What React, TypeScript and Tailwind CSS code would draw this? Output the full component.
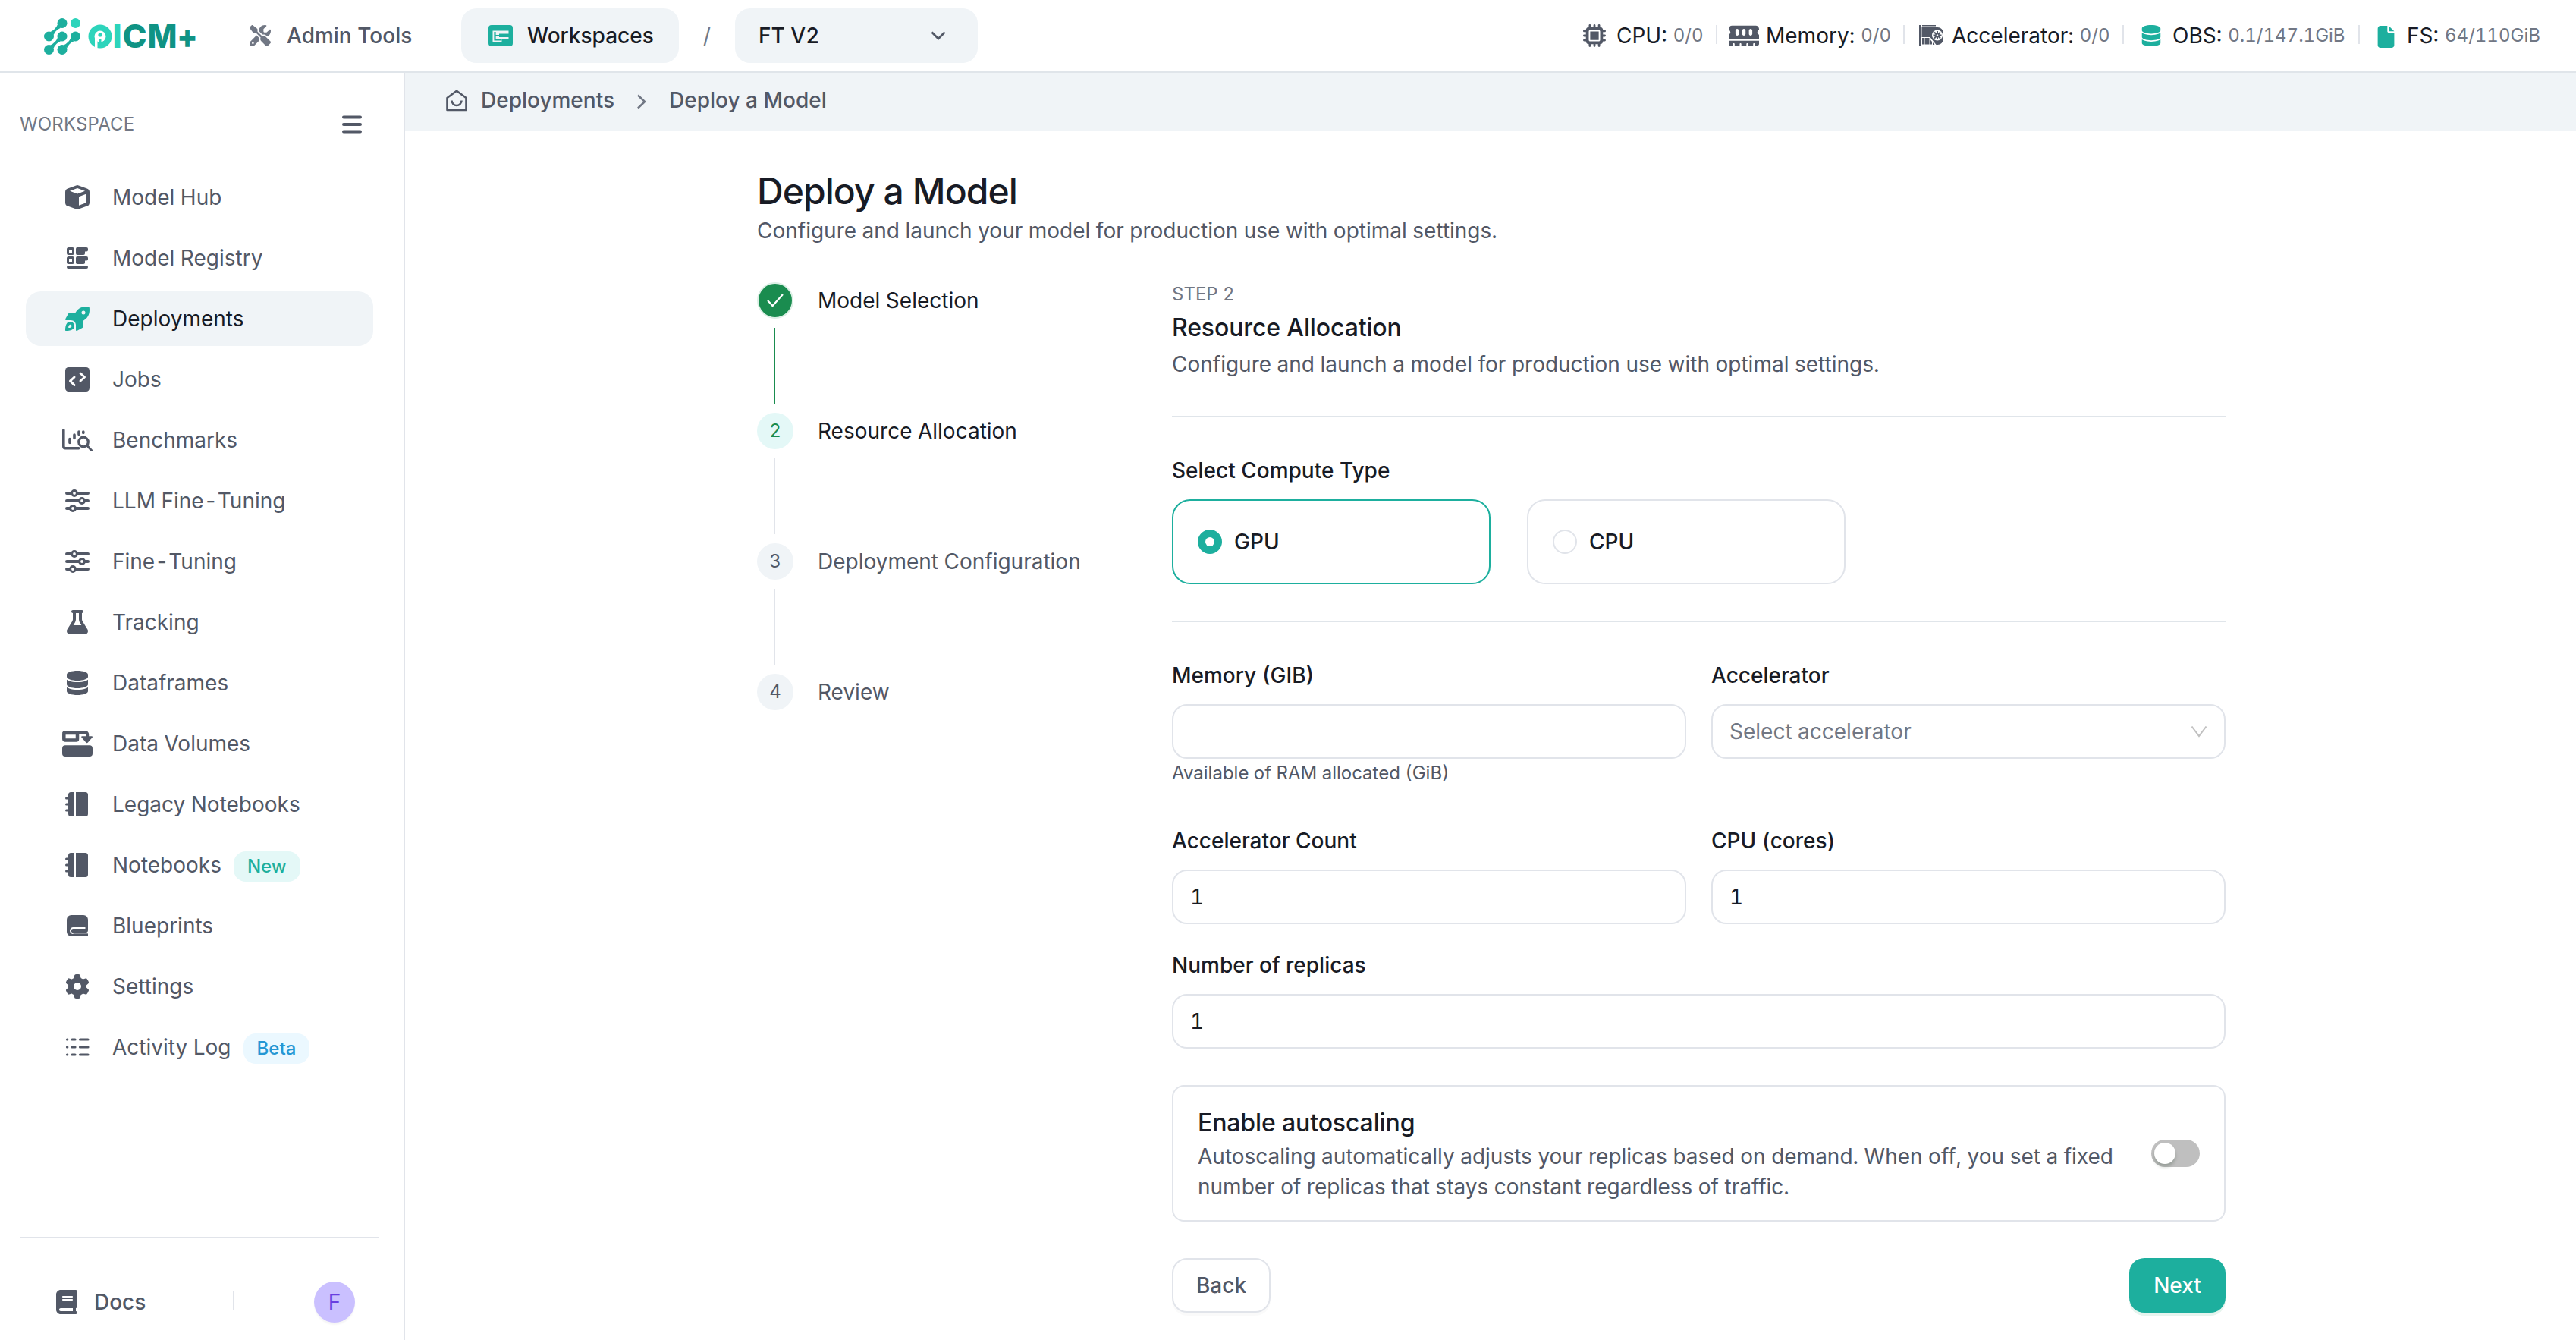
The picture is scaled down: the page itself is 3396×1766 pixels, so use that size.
import React from 'react';
import {
  FaBook,
  FaDatabase,
  FaFile,
  FaFlask,
  FaGear,
  FaMemory,
  FaMicrochip,
  FaScrewdriverWrench,
} from 'react-icons/fa6';

interface NavItem {
  label: string;
  icon: React.ReactNode;
  badge?: 'New' | 'Beta';
  active?: boolean;
}

const Logo = () => (
  <svg width="210" height="52" viewBox="0 0 210 52" className="shrink-0">
    <g fill="#1daf9e">
      <circle cx="26" cy="9.500" r="6.500" />
      <circle cx="8.500" cy="27" r="6.500" />
      <circle cx="26" cy="27" r="6.500" />
      <circle cx="43.500" cy="27" r="6.500" />
      <circle cx="8.500" cy="44.500" r="6.500" />
      <circle cx="26" cy="44.500" r="6.500" />
      <path d="M19.800 11.500Q17.500 17.500 10.500 21L14.700 25Q17 19 24 15.800z" />
      <path d="M19.800 29Q17.500 35 10.500 38.500L14.700 42.500Q17 36.500 24 33.300z" />
      <path d="M37.300 29Q35 35 28 38.500L32.200 42.500Q34.500 36.500 41.500 33.300z" />
    </g>
    <circle cx="43.500" cy="9.500" r="6.500" fill="#2dd4bb" />
    <circle cx="76" cy="27" r="15.500" fill="#2dd4bb" />
    <circle cx="76" cy="27" r="7.500" fill="#fff" />
    <path d="M69 27h3.500v16h-3.500z" fill="#fff" />
    <circle cx="76" cy="25" r="2.600" fill="#2dd4bb" />
    <path d="M74 30h3.500v10h-3.500z" fill="#2dd4bb" />
    <g fontFamily="Inter, sans-serif" fontWeight="800" fontSize="42.500">
      <text x="92.500" y="42" fill="#2dd4bb">I</text>
      <text x="105.500" y="42" fill="#0f9384" textLength="32" lengthAdjust="spacingAndGlyphs">C</text>
      <text x="138.500" y="42" fill="#0f9384" textLength="39" lengthAdjust="spacingAndGlyphs">M</text>
      <text x="178" y="42" fill="#0f9384" textLength="26" lengthAdjust="spacingAndGlyphs">+</text>
    </g>
  </svg>
);

const WorkspaceIcon = () => (
  <svg width="32" height="28" viewBox="0 0 32 28" fill="none">
    <rect width="32" height="28" rx="4" fill="#1daf9e" />
    <path d="M5.500 7.500h21v15h-21z" fill="#f0f4f7" />
    <path d="M8.500 9v10.500h9M8.500 14h6" stroke="#1daf9e" strokeWidth="2.200" />
    <path d="M14 11.500h13v4.500h-13zM17.500 18h9.500v4h-9.500z" fill="#1daf9e" />
  </svg>
);

const AcceleratorIcon = () => (
  <svg width="32" height="28" viewBox="0 0 32 28" fill="currentColor">
    <path d="M0 0h2v28h-2zM4 0h18v1.500h-18z" />
    <path d="M3.500 3h21a7.500 7.500 0 0 1 7.500 7.500v8a7.500 7.500 0 0 1-7.500 7.500h-2l-8-10h-11z" />
    <path d="M4 17h2.500v8.500h-2.500zM7.500 17h2.500v8.500h-2.500zM11 17h2.500v8.500h-2.500zM14.500 19l2.500 3v3.500h-2.500zM18 23l2.500 3h-2.500z" />
    <circle cx="24" cy="13.500" r="7" fill="#fff" />
    <g stroke="#525866" strokeWidth="2">
      <path d="M24 8v11M18.500 13.500h11M20 9.500l8 8M28 9.500l-8 8" />
    </g>
    <circle cx="24" cy="13.500" r="1.200" fill="#fff" />
  </svg>
);

const HomeIcon = () => (
  <svg width="28" height="29" viewBox="0 0 28 29" fill="none" stroke="currentColor" strokeWidth="2.600">
    <path d="M14 1.800 1.500 11v16h25v-16z" strokeLinejoin="round" />
    <path d="M7.500 14.500a6.500 6.500 0 0 0 13 0" />
  </svg>
);

const CubeIcon = () => (
  <svg width="32" height="32" viewBox="0 0 32 32" fill="currentColor">
    <path
      fillRule="evenodd"
      d="M14.300.4a5 5 0 0 1 3.400 0l11 4a5 5 0 0 1 3.300 4.700v13.800a5 5 0 0 1-3.300 4.700l-11 4a5 5 0 0 1-3.400 0l-11-4a5 5 0 0 1-3.300-4.700v-13.800a5 5 0 0 1 3.300-4.700zM16 4 6 7.700l10 3.700 10-3.700zM18 15.200v11.600l10-3.800v-11.500z"
    />
  </svg>
);

const RegistryIcon = () => (
  <svg width="28" height="28" viewBox="0 0 28 28" fill="currentColor">
    <rect x="1.500" y="1.500" width="7" height="7" rx="1" fill="none" stroke="currentColor" strokeWidth="3" />
    <rect x="1.500" y="13.500" width="7" height="7" rx="1" fill="none" stroke="currentColor" strokeWidth="3" />
    <path d="M14 0h12a2 2 0 0 1 2 2v1.500a2 2 0 0 1-2 2h-2v2.500a2 2 0 0 1-2 2h-8a2 2 0 0 1-2-2v-6a2 2 0 0 1 2-2zM14 12h12a2 2 0 0 1 2 2v1.500a2 2 0 0 1-2 2h-2v2.500a2 2 0 0 1-2 2h-8a2 2 0 0 1-2-2v-6a2 2 0 0 1 2-2z" />
    <rect y="24" width="28" height="4" rx="2" />
  </svg>
);

const RocketIcon = () => (
  <svg width="32" height="32" viewBox="0 0 32 32" fill="currentColor">
    <path
      fillRule="evenodd"
      d="M30.500.2C22.500-.8 17 2 13.500 8H7c-1.500 0-2.500.6-3.200 1.800L.3 16.200c-.5.9 0 1.800 1 1.800h6.200c3.700 0 6.500 2.800 6.500 6.500v6.200c0 1 .9 1.600 1.800 1.100l6.400-3.600c1.100-.7 1.800-1.800 1.800-3v-6.700c6-3.500 8.800-9 7.800-17-.1-.7-.6-1.200-1.300-1.300zM24 5.500a2.500 2.500 0 1 1 0 5 2.500 2.500 0 0 1 0-5z"
    />
    <path
      fillRule="evenodd"
      d="M6.500 20a5.500 5.500 0 0 1 3.900 9.400c-2 2-6.400 2.600-9.400 2.600-.6 0-1-.4-1-1 0-3 .6-7.400 2.600-9.400A5.500 5.500 0 0 1 6.500 20zM7.300 23.700c-1 0-2 .4-2.500 1.300-.5.700-.7 1.900-.6 2.700 0 .3.200.4.400.4.900 0 2-.1 2.700-.6a2.100 2.100 0 0 0 0-3.800z"
    />
  </svg>
);

const JobsIcon = () => (
  <svg width="32" height="32" viewBox="0 0 32 32" fill="none">
    <rect width="32" height="32" rx="4.500" fill="currentColor" />
    <path
      d="M12 13 6.500 18.200l5.500 5.300M20 8l5.500 5-5.500 5"
      stroke="#fff"
      strokeWidth="3"
      strokeLinecap="round"
      strokeLinejoin="round"
    />
  </svg>
);

const BenchmarkIcon = () => (
  <svg width="40" height="30" viewBox="0 0 40 30" fill="none" stroke="currentColor" strokeWidth="3.600" strokeLinecap="round">
    <path d="M1.800 1.800v21.500c0 1.700.8 2.500 2.500 2.500h17.500" />
    <path d="M10 13.500v5M16 8v4.500M22 4v3.500M27.800 4v1.500" />
    <circle cx="28" cy="17.500" r="6.300" strokeWidth="3.200" />
    <path d="M33 22.500l5.500 6" strokeWidth="3" />
  </svg>
);

const SlidersIcon = () => (
  <svg width="32" height="30" viewBox="0 0 32 30" fill="#fff" stroke="currentColor" strokeLinecap="round">
    <path d="M2 5h28M2 15h28M2 25h28" strokeWidth="4" />
    <g strokeWidth="3">
      <circle cx="12" cy="5" r="3.400" />
      <circle cx="22" cy="15" r="3.400" />
      <circle cx="10" cy="25" r="3.400" />
    </g>
  </svg>
);

const VolumesIcon = () => (
  <svg width="40" height="34" viewBox="0 0 40 34" fill="currentColor">
    <path d="M2.200 3.500a1.500 1.500 0 0 1 1.500-1.500h26c2.500 0 3.500 1.500 3.500 3.500v5" fill="none" stroke="currentColor" strokeWidth="4" />
    <rect x="2.300" y="3" width="17.700" height="9.500" rx="1.500" fill="#fff" stroke="currentColor" strokeWidth="4.500" />
    <path d="M26.300 7.300h12.500c1 0 1.500 1 .8 1.800l-5.700 6.500a1.700 1.700 0 0 1-2.600 0l-5.700-6.500c-.7-.8-.3-1.800.7-1.800z" />
    <rect y="19.300" width="40" height="14.700" rx="4" />
  </svg>
);

const NotebookIcon = () => (
  <svg width="32" height="32" viewBox="0 0 32 32" fill="currentColor">
    <path d="M7.500 0h4.500v32h-4.500a3.500 3.500 0 0 1-3.500-3.500v-25a3.500 3.500 0 0 1 3.500-3.500zM14 0h12.500a3.500 3.500 0 0 1 3.500 3.500v25a3.500 3.500 0 0 1-3.500 3.500h-12.500z" />
    <path d="M1.500 8h4M1.500 16h4M1.500 24h4" stroke="currentColor" strokeWidth="3" strokeLinecap="round" />
  </svg>
);

const BlueprintIcon = () => (
  <svg width="28" height="28" viewBox="0 0 28 28" fill="currentColor">
    <path d="M6 0h16a6 6 0 0 1 6 6v14c0 1.500-.8 2.500-2 3v.8h.5a2 2 0 0 1 0 4.200H6a6 6 0 0 1-6-6V6a6 6 0 0 1 6-6z" />
    <path d="M24.500 17h-16a3.600 3.600 0 0 0 0 7.200" fill="none" stroke="#fff" strokeWidth="1.800" />
    <path d="M7 23.700h21" stroke="#fff" strokeWidth="1.200" />
  </svg>
);

const ActivityIcon = () => (
  <svg width="32" height="26" viewBox="0 0 32 26" fill="none" stroke="currentColor" strokeWidth="3.200" strokeLinecap="round">
    <path d="M2.500 3h.3M9 3h4M19.500 3h10.500M2.500 13h.3M9 13h4M19.500 13h10.500M2.500 23h.3M9 23h4M19.500 23h10.500" />
  </svg>
);

const navItems: NavItem[] = [
  { label: 'Model Hub', icon: <CubeIcon /> },
  { label: 'Model Registry', icon: <RegistryIcon /> },
  { label: 'Deployments', icon: <RocketIcon />, active: true },
  { label: 'Jobs', icon: <JobsIcon /> },
  { label: 'Benchmarks', icon: <BenchmarkIcon /> },
  { label: 'LLM Fine-Tuning', icon: <SlidersIcon /> },
  { label: 'Fine-Tuning', icon: <SlidersIcon /> },
  { label: 'Tracking', icon: <FaFlask size={32} /> },
  { label: 'Dataframes', icon: <FaDatabase size={32} /> },
  { label: 'Data Volumes', icon: <VolumesIcon /> },
  { label: 'Legacy Notebooks', icon: <NotebookIcon /> },
  { label: 'Notebooks', icon: <NotebookIcon />, badge: 'New' },
  { label: 'Blueprints', icon: <BlueprintIcon /> },
  { label: 'Settings', icon: <FaGear size={32} /> },
  { label: 'Activity Log', icon: <ActivityIcon />, badge: 'Beta' },
];

const steps = ['Model Selection', 'Resource Allocation', 'Deployment Configuration', 'Review'];

const Stat = ({ icon, label, value, className }: { icon: React.ReactNode; label: string; value: string; className: string }) => (
  <div className={`flex items-center whitespace-nowrap ${className}`}>
    {icon}
    <span className="text-[#181b25]">{label}</span>
    <span className="ml-2 text-2xl text-[#717784]">{value}</span>
  </div>
);

const StatDivider = () => <div className="mb-1 h-[25px] w-0.5 bg-[#e1e4ea]" />;

const Header = () => (
  <header className="flex h-24 shrink-0 items-center border-b-2 border-[#e0e5ea] pl-14">
    <Logo />
    <div className="ml-[63px] flex w-[279px] items-center">
      <FaScrewdriverWrench size={28} color="#717784" />
      <span className="ml-[21px] font-medium">Admin Tools</span>
    </div>
    <div className="flex h-[72px] w-[287px] items-center rounded-[20px] bg-[#f0f4f7] pl-9 font-medium text-[#181b25]">
      <WorkspaceIcon />
      <span className="ml-[19px]">Workspaces</span>
    </div>
    <span className="w-[74px] text-center text-[#717784]">/</span>
    <div className="flex h-[72px] w-[320px] items-center justify-between rounded-[20px] bg-[#f0f4f7] pr-[42px] pl-[31px] font-medium text-[#181b25]">
      FT V2
      <svg width="20" height="12" viewBox="0 0 20 12" fill="none" stroke="#525866" strokeWidth="2.800">
        <path d="M1.500 1.500 10 10l8.500-8.500" />
      </svg>
    </div>
    <div className="ml-auto flex items-center">
      <Stat className="w-[175px]" icon={<FaMicrochip size={30} className="mr-[14px]" />} label="CPU:" value="0/0" />
      <StatDivider />
      <Stat className="ml-[15px] w-[230px]" icon={<FaMemory size={36} className="mr-[9px] w-10" />} label="Memory:" value="0/0" />
      <StatDivider />
      <Stat className="ml-[19px] w-[268px]" icon={<span className="mr-[11px]"><AcceleratorIcon /></span>} label="Accelerator:" value="0/0" />
      <StatDivider />
      <Stat className="ml-[22px] w-[287px]" icon={<FaDatabase size={28} color="#1daf9e" className="mr-[14px]" />} label="OBS:" value="0.1/147.1GiB" />
      <StatDivider />
      <Stat className="ml-[20px] w-[265px]" icon={<FaFile size={29} color="#1daf9e" className="mt-[2px] mr-[13px]" />} label="FS:" value="64/110GiB" />
    </div>
  </header>
);

const Sidebar = () => (
  <aside className="flex w-[534px] shrink-0 flex-col border-r-2 border-[#e1e4ea] pt-12">
    <div className="flex h-10 items-center justify-between pr-[55px] pl-[26px] text-2xl tracking-[0.15px] text-[#717784]">
      WORKSPACE
      <svg width="26" height="24" viewBox="0 0 26 24" stroke="#525866" strokeWidth="4" strokeLinecap="round">
        <path d="M2 2.500h22M2 12h22M2 21.500h22" />
      </svg>
    </div>
    <nav className="mt-10 mr-10 ml-[34px] flex flex-col gap-2">
      {navItems.map((item) => (
        <div
          key={item.label}
          className={`flex h-[72px] items-center rounded-[20px] pl-12 ${item.active ? 'bg-[#f0f4f7] text-[#181b25]' : ''}`}
        >
          <span className={`flex w-10 justify-center ${item.active ? 'text-[#1daf9e]' : ''}`}>{item.icon}</span>
          <span className="ml-[26px]">{item.label}</span>
          {item.badge && (
            <span
              className={`mt-1 ml-4 flex h-10 items-center rounded-2xl px-[18px] text-2xl font-medium ${
                item.badge === 'New' ? 'bg-[#e4f8f7] text-[#1daf9e]' : 'bg-[#ebf8ff] text-[#2597d4]'
              }`}
            >
              {item.badge}
            </span>
          )}
        </div>
      ))}
    </nav>
    <div className="mt-auto mr-8 ml-[26px] flex h-[136px] border-t-2 border-[#e1e4ea] pt-14">
      <div className="flex h-14 w-[281px] items-center pl-12 font-medium">
        <FaBook size={32} className="w-7" />
        <span className="ml-[22px]">Docs</span>
      </div>
      <div className="mt-3.5 h-[25px] w-0.5 bg-[#e1e4ea]" />
      <div className="mt-px ml-[105px] flex h-[54px] w-[54px] items-center justify-center rounded-full bg-[#cac0ff] text-[#693ee0] shadow-[0_3px_2px_rgba(0,0,0,0.04)]">
        F
      </div>
    </div>
  </aside>
);

const Stepper = () => (
  <div className="w-[547px] shrink-0">
    {steps.map((step, i) => (
      <div key={step} className={`flex ${i < steps.length - 1 ? 'h-[172px]' : 'h-12'}`}>
        <div className="flex w-12 flex-col items-center">
          <div
            className={`flex h-12 w-12 shrink-0 items-center justify-center rounded-full text-2xl ${
              i === 0
                ? 'border-2 border-[#dcefe5] bg-[#1a8c4f] text-white'
                : i === 1
                  ? 'bg-[#e4f8f7] text-[#1a8c4f]'
                  : 'bg-[#f0f4f7]'
            }`}
          >
            {i === 0 ? (
              <svg width="22" height="18" viewBox="0 0 22 18" fill="none" stroke="currentColor" strokeWidth="2.200">
                <path d="M1 9l6.500 7L21 1" />
              </svg>
            ) : (
              i + 1
            )}
          </div>
          {i < steps.length - 1 && (
            <div className={`mt-3 mr-0.5 h-[100px] w-0.5 ${i === 0 ? 'bg-[#1a8c4f]' : 'bg-[#e1e4ea]'}`} />
          )}
        </div>
        <span className={`ml-8 h-12 leading-[49px] ${i < 2 ? 'text-[#181b25]' : ''}`}>{step}</span>
      </div>
    ))}
  </div>
);

const Field = ({ label, hint, children }: { label: string; hint?: string; children?: React.ReactNode }) => (
  <div className="flex-1">
    <div className="leading-10 font-medium text-[#181b25]">{label}</div>
    <div className="mt-[18px] flex h-[72px] items-center justify-between rounded-[20px] border-2 border-[#e1e4ea] px-[22px] text-[#181b25]">
      {children}
    </div>
    {hint && <div className="h-9 text-2xl leading-[38px]">{hint}</div>}
  </div>
);

const ComputeOption = ({ label, selected }: { label: string; selected?: boolean }) => (
  <div
    className={`flex h-28 w-[420px] items-center rounded-3xl border-2 pl-8 font-medium text-[#181b25] ${
      selected ? 'border-[#1daf9e]' : 'border-[#e1e4ea]'
    }`}
  >
    <span
      className={`flex h-8 w-8 items-center justify-center rounded-full border-2 ${
        selected ? 'border-[#1daf9e] bg-[#1daf9e]' : 'border-[#e1e4ea]'
      }`}
    >
      {selected && <span className="h-3 w-3 rounded-full bg-white" />}
    </span>
    <span className="ml-4">{label}</span>
  </div>
);

const ResourceForm = () => (
  <div className="w-[1389px]">
    <div className="text-2xl leading-[31px] text-[#717784]">STEP 2</div>
    <h2 className="mt-[5px] text-[32px] leading-[48px] font-medium tracking-[-0.13px] text-[#181b25]">Resource Allocation</h2>
    <p className="mt-1 leading-10">Configure and launch a model for production use with optimal settings.</p>
    <hr className="mt-12 border-t-2 border-[#e0e5ea]" />

    <div className="mt-[50px] leading-10 font-medium text-[#181b25]">Select Compute Type</div>
    <div className="mt-[18px] flex gap-12">
      <ComputeOption label="GPU" selected />
      <ComputeOption label="CPU" />
    </div>
    <hr className="mt-12 border-t-2 border-[#e0e5ea]" />

    <div className="mt-[50px] flex gap-[33px]">
      <Field label="Memory (GIB)" hint="Available of RAM allocated (GiB)" />
      <Field label="Accelerator">
        <span className="text-[#717784]">Select accelerator</span>
        <svg width="22" height="16" viewBox="0 0 22 16" fill="none" stroke="#bfbfbf" strokeWidth="2">
          <path d="M1.500 1.500 11 14l9.500-12.500" />
        </svg>
      </Field>
    </div>
    <div className="mt-[52px] flex gap-[33px]">
      <Field label="Accelerator Count">1</Field>
      <Field label="CPU (cores)">1</Field>
    </div>
    <div className="mt-[34px] flex">
      <Field label="Number of replicas">1</Field>
    </div>

    <div className="mt-12 flex h-[180px] items-center justify-between rounded-2xl border-2 border-[#e1e4ea] px-8">
      <div className="mt-[3px] w-[1230px]">
        <div className="text-[32px] leading-10 font-medium tracking-[-0.13px] text-[#181b25]">Enable autoscaling</div>
        <p className="mt-1 leading-10">
          Autoscaling automatically adjusts your replicas based on demand. When off, you set a fixed
          <br />
          number of replicas that stays constant regardless of traffic.
        </p>
      </div>
      <div className="flex h-9 w-16 items-center rounded-full bg-[#bfbfbf] pl-1">
        <div className="h-7 w-7 rounded-full bg-white shadow-[0_4px_4px_rgba(0,35,11,0.2)]" />
      </div>
    </div>

    <div className="mt-12 flex justify-between font-medium">
      <button className="h-[72px] w-[130px] rounded-[20px] border-2 border-[#e1e4ea] shadow-[0_4px_0_rgba(0,0,0,0.02)]">Back</button>
      <button className="h-[72px] w-[127px] rounded-[20px] bg-[#1daf9e] text-white shadow-[0_4px_0_rgba(5,145,90,0.1)]">Next</button>
    </div>
  </div>
);

export default function App() {
  return (
    <div className="flex h-[1766px] w-[3396px] flex-col overflow-hidden bg-white font-['Inter',sans-serif] text-[28px] text-[#525866] tabular-nums">
      <Header />
      <div className="flex flex-1">
        <Sidebar />
        <main className="flex-1">
          <div className="flex h-[76px] items-center bg-[#f0f4f7] pb-1 pl-[54px] font-medium">
            <HomeIcon />
            <span className="ml-[18px]">Deployments</span>
            <svg width="14" height="20" viewBox="0 0 14 20" fill="none" stroke="#717784" strokeWidth="2.600" className="mx-[29px] mt-1">
              <path d="M2 1.500l9 8.500-9 8.500" />
            </svg>
            <span>Deploy a Model</span>
          </div>
          <div className="mt-12 ml-[464px]">
            <h1 className="text-5xl leading-[63px] font-medium tracking-[-0.95px] text-[#181b25]">Deploy a Model</h1>
            <p className="mt-px leading-10">Configure and launch your model for production use with optimal settings.</p>
            <div className="mt-12 flex">
              <Stepper />
              <ResourceForm />
            </div>
          </div>
        </main>
      </div>
    </div>
  );
}
